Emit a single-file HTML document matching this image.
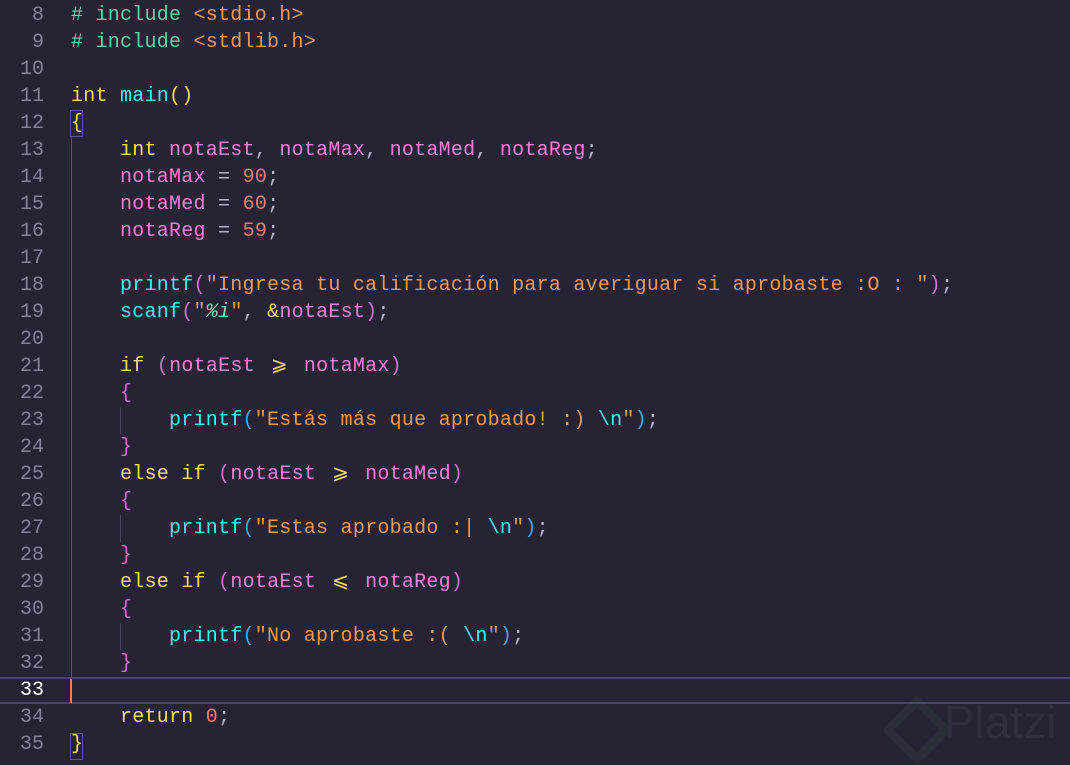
<!DOCTYPE html><html><head><style>
body{margin:0;width:1070px;height:761px;background:#262335;overflow:hidden;position:relative;font-family:"Liberation Mono",monospace;font-size:20px}
.l{position:absolute;left:0;top:0;height:27px;line-height:28px;white-space:pre;width:1070px}
.n{position:absolute;right:1026px;color:#858199;text-align:right}
.c{position:absolute;left:71px;color:#ff7edb;letter-spacing:0.25px}
.k{color:#fede5d}.f{color:#36f9f6}.s{color:#f39a55}.m{color:#f97e72}.p{color:#b7b2cc}.i{color:#5fd3a7}.b{color:#3aa6ee}.g{color:#d46fcf}.e{color:#36f9f6}
.o{display:inline-block;width:24.5px;text-align:center;color:#fede5d}
</style></head><body>
<div style="position:absolute;left:0;top:677px;width:1070px;height:27px;border-top:2px solid #4a4270;border-bottom:2px solid #4a4270;box-sizing:border-box"></div>
<div style="position:absolute;left:70px;top:679px;width:2px;height:24px;background:#f97e72"></div>
<div style="position:absolute;left:71px;top:137px;width:1px;height:540px;background:#6a4878"></div>
<div style="position:absolute;left:120px;top:407px;width:1px;height:27px;background:#4a4560"></div>
<div style="position:absolute;left:120px;top:515px;width:1px;height:27px;background:#4a4560"></div>
<div style="position:absolute;left:120px;top:623px;width:1px;height:27px;background:#4a4560"></div>
<div style="position:absolute;left:70px;top:110px;width:11px;height:25px;border:1px solid #5a5490"></div>
<div style="position:absolute;left:70px;top:733px;width:11px;height:25px;border:1px solid #5a5490"></div>
<div style="position:absolute;left:880px;top:695px;width:180px;height:60px;opacity:.045;color:#fff;font-family:'Liberation Sans',sans-serif;font-size:46px">
<div style="position:absolute;left:12px;top:10px;width:32px;height:32px;border:9px solid #9f9;transform:rotate(45deg);border-radius:6px"></div>
<span style="position:absolute;left:64px;top:0">Platzi</span></div>
<div class="l" style="top:2px"><span class="n">8</span><span class="c"><span class="i"># include </span><span class="s">&lt;stdio.h&gt;</span></span></div>
<div class="l" style="top:29px"><span class="n">9</span><span class="c"><span class="i"># include </span><span class="s">&lt;stdlib.h&gt;</span></span></div>
<div class="l" style="top:56px"><span class="n">10</span></div>
<div class="l" style="top:83px"><span class="n">11</span><span class="c"><span class="k">int</span> <span class="f">main</span><span class="k">()</span></span></div>
<div class="l" style="top:110px"><span class="n">12</span><span class="c"><span class="k">{</span></span></div>
<div class="l" style="top:137px"><span class="n">13</span><span class="c">    <span class="k">int</span> notaEst<span class="p">,</span> notaMax<span class="p">,</span> notaMed<span class="p">,</span> notaReg<span class="p">;</span></span></div>
<div class="l" style="top:164px"><span class="n">14</span><span class="c">    notaMax <span class="p">=</span> <span class="m">90</span><span class="p">;</span></span></div>
<div class="l" style="top:191px"><span class="n">15</span><span class="c">    notaMed <span class="p">=</span> <span class="m">60</span><span class="p">;</span></span></div>
<div class="l" style="top:218px"><span class="n">16</span><span class="c">    notaReg <span class="p">=</span> <span class="m">59</span><span class="p">;</span></span></div>
<div class="l" style="top:245px"><span class="n">17</span></div>
<div class="l" style="top:272px"><span class="n">18</span><span class="c">    <span class="f">printf</span><span class="g">(</span><span class="s">"Ingresa tu calificación para averiguar si aprobaste :O : "</span><span class="g">)</span><span class="p">;</span></span></div>
<div class="l" style="top:299px"><span class="n">19</span><span class="c">    <span class="f">scanf</span><span class="g">(</span><span class="s">"</span><i style="color:#72f1b8">%i</i><span class="s">"</span><span class="p">,</span> <span class="k">&amp;</span>notaEst<span class="g">)</span><span class="p">;</span></span></div>
<div class="l" style="top:326px"><span class="n">20</span></div>
<div class="l" style="top:353px"><span class="n">21</span><span class="c">    <span class="k">if</span> <span class="g">(</span>notaEst <span class="o">⩾</span> notaMax<span class="g">)</span></span></div>
<div class="l" style="top:380px"><span class="n">22</span><span class="c">    <span class="g">{</span></span></div>
<div class="l" style="top:407px"><span class="n">23</span><span class="c">        <span class="f">printf</span><span class="b">(</span><span class="s">"Estás más que aprobado! :) </span><span class="e">\n</span><span class="s">"</span><span class="b">)</span><span class="p">;</span></span></div>
<div class="l" style="top:434px"><span class="n">24</span><span class="c">    <span class="g">}</span></span></div>
<div class="l" style="top:461px"><span class="n">25</span><span class="c">    <span class="k">else if</span> <span class="g">(</span>notaEst <span class="o">⩾</span> notaMed<span class="g">)</span></span></div>
<div class="l" style="top:488px"><span class="n">26</span><span class="c">    <span class="g">{</span></span></div>
<div class="l" style="top:515px"><span class="n">27</span><span class="c">        <span class="f">printf</span><span class="b">(</span><span class="s">"Estas aprobado :| </span><span class="e">\n</span><span class="s">"</span><span class="b">)</span><span class="p">;</span></span></div>
<div class="l" style="top:542px"><span class="n">28</span><span class="c">    <span class="g">}</span></span></div>
<div class="l" style="top:569px"><span class="n">29</span><span class="c">    <span class="k">else if</span> <span class="g">(</span>notaEst <span class="o">⩽</span> notaReg<span class="g">)</span></span></div>
<div class="l" style="top:596px"><span class="n">30</span><span class="c">    <span class="g">{</span></span></div>
<div class="l" style="top:623px"><span class="n">31</span><span class="c">        <span class="f">printf</span><span class="b">(</span><span class="s">"No aprobaste :( </span><span class="e">\n</span><span class="s">"</span><span class="b">)</span><span class="p">;</span></span></div>
<div class="l" style="top:650px"><span class="n">32</span><span class="c">    <span class="g">}</span></span></div>
<div class="l" style="top:677px"><span class="n" style="color:#fff">33</span></div>
<div class="l" style="top:704px"><span class="n">34</span><span class="c">    <span class="k">return</span> <span class="m">0</span><span class="p">;</span></span></div>
<div class="l" style="top:731px"><span class="n">35</span><span class="c"><span class="k">}</span></span></div>
</body></html>
